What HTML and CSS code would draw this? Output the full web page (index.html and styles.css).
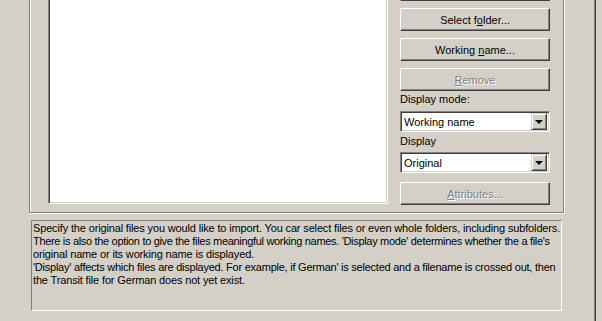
FILE: index.html
```html
<!DOCTYPE html>
<html lang="en">
<head>
    <meta charset="UTF-8">
    <title>Import files</title>
    <link rel="stylesheet" href="styles.css">
</head>
<body>
    <div class="page">
        <div class="group">
            <div class="listbox"></div>
            <div class="side">
                <button class="btn first" aria-label="Add files"></button>
                <button class="btn">Select f<u>o</u>lder...</button>
                <button class="btn">Working <u>n</u>ame...</button>
                <button class="btn" disabled><u>R</u>emove</button>
                <label class="field-label">Display mode:</label>
                <div class="combo">
                    <span class="combo-text">Working name</span>
                    <span class="combo-btn"><span class="arrow"></span></span>
                </div>
                <label class="field-label second">Display</label>
                <div class="combo">
                    <span class="combo-text">Original</span>
                    <span class="combo-btn"><span class="arrow"></span></span>
                </div>
                <button class="btn last" disabled><u>A</u>ttributes...</button>
            </div>
        </div>
        <div class="info">
            <span class="line">Specify the original files you would like to import. You car select files or even whole folders, including subfolders.</span>
            <span class="line tight">There is also the option to give the files meaningful working names. 'Display mode' determines whether the a file's</span>
            <span class="line">original name or its working name is displayed.</span>
            <span class="line snug">'Display' affects which files are displayed. For example, if German' is selected and a filename is crossed out, then</span>
            <span class="line">the Transit file for German does not yet exist.</span>
        </div>
    </div>
</body>
</html>
```
FILE: styles.css
```css
body {
    margin: 0;
    background-color: #d4d0c8;
    font-family: "Liberation Sans", Arial, sans-serif;
    font-size: 11px;
    color: #000;
    overflow: hidden;
}
.page {
    width: 565px;
    height: 321px;
    padding-left: 29px;
    border-right: 1px solid #808080;
    box-shadow: 1px 0 0 #404040;
    overflow: hidden;
}
.group {
    display: flex;
    align-items: flex-start;
    width: 515px;
    height: 212px;
    padding-left: 18px;
    border: 1px solid #808080;
    border-top: none;
    box-shadow: inset 1px 0 0 #fff, 1px 0 0 #fff, 0 1px 0 #fff, 1px 1px 0 #fff;
}
.listbox {
    width: 338px;
    height: 212px;
    margin-top: -10px;
    background-color: #fff;
    border: 1px solid;
    border-color: #808080 #fff #fff #808080;
    box-shadow: inset 1px 1px 0 #404040, inset -1px -1px 0 #d4d0c8;
}
.side {
    display: flex;
    flex-direction: column;
    width: 150px;
    margin-left: 12px;
    margin-top: -22px;
}
.btn {
    height: 23px;
    margin-top: 7px;
    padding: 0;
    font: inherit;
    color: #000;
    background-color: #d4d0c8;
    border: 1px solid;
    border-color: #fff #404040 #404040 #fff;
    box-shadow: inset -1px -1px 0 #808080;
}
.btn.first {
    margin-top: 0;
}
.btn:disabled {
    color: #808080;
    text-shadow: 1px 1px 0 #fff;
}
.btn.last {
    margin-top: 9px;
}
.field-label {
    height: 13px;
    line-height: 13px;
    margin-top: 2px;
    margin-bottom: 5px;
}
.field-label.second {
    margin-top: 3px;
    margin-bottom: 4px;
}
.combo {
    display: flex;
    align-items: center;
    height: 21px;
    box-sizing: border-box;
    background-color: #fff;
    border: 1px solid;
    border-color: #808080 #fff #fff #808080;
    box-shadow: inset 1px 1px 0 #404040, inset -1px -1px 0 #d4d0c8;
    padding: 2px 2px 2px 3px;
}
.combo-text {
    flex: 1;
}
.combo-btn {
    display: flex;
    align-items: center;
    justify-content: center;
    width: 16px;
    height: 17px;
    box-sizing: border-box;
    background-color: #d4d0c8;
    border: 1px solid;
    border-color: #d4d0c8 #404040 #404040 #d4d0c8;
    box-shadow: inset 1px 1px 0 #fff, inset -1px -1px 0 #808080;
}
.arrow {
    width: 0;
    height: 0;
    border-left: 4px solid transparent;
    border-right: 4px solid transparent;
    border-top: 4px solid #000;
}
.info {
    width: 531px;
    height: 91px;
    margin: 7px 0 0 2px;
    padding: 1px 0 0 1px;
    box-sizing: border-box;
    border: 1px solid;
    border-color: #808080 #fff #fff #808080;
    line-height: 13px;
    white-space: nowrap;
    overflow: hidden;
}
.line {
    display: block;
    letter-spacing: -0.15px;
}
.line.tight {
    letter-spacing: -0.32px;
}
.line.snug {
    letter-spacing: -0.24px;
}
```
